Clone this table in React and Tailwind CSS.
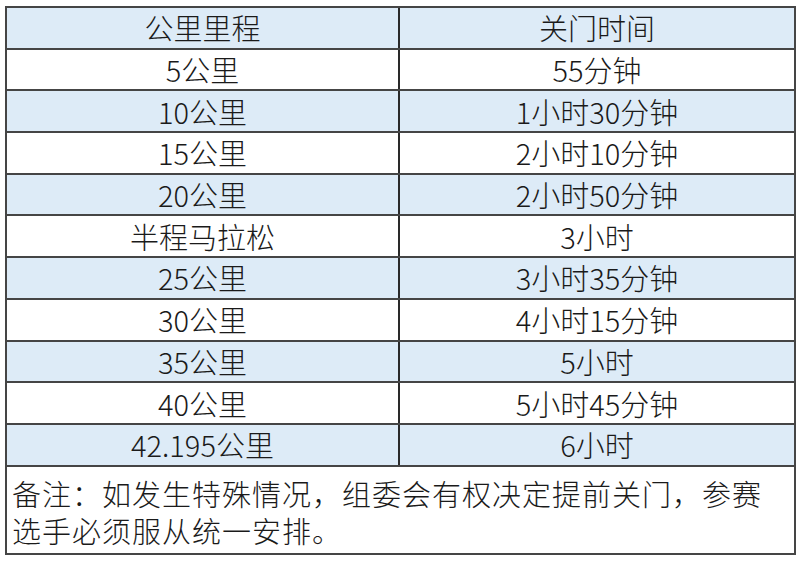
import React from "react";

const ROWS = [
  ["5公里", "55分钟"],
  ["10公里", "1小时30分钟"],
  ["15公里", "2小时10分钟"],
  ["20公里", "2小时50分钟"],
  ["半程马拉松", "3小时"],
  ["25公里", "3小时35分钟"],
  ["30公里", "4小时15分钟"],
  ["35公里", "5小时"],
  ["40公里", "5小时45分钟"],
  ["42.195公里", "6小时"],
];

function Row({ left, right, blue }) {
  return (
    <div className={`grid h-[41.7px] grid-cols-[393px_1fr] border-b-2 border-[#454545] ${blue ? "bg-[#ddebf7]" : "bg-white"}`}>
      <div className="flex items-center justify-center border-r-2 border-[#2a2a2a]">{left}</div>
      <div className="flex items-center justify-center">{right}</div>
    </div>
  );
}

export default function App() {
  return (
    <div className="h-[562px] w-[800px] bg-white pl-[5px] pt-[6px] text-[#1a1a1a]" style={{ fontFamily: '"Noto Sans CJK SC", "Noto Sans", sans-serif' }}>
      <div className="w-[791px] border-2 border-[#454545] text-[29px] font-light leading-none">
        <Row left="公里里程" right="关门时间" blue />
        {ROWS.map(([l, r], i) => (
          <Row key={l} left={l} right={r} blue={i % 2 === 1} />
        ))}
        <div className="flex h-[86px] flex-col px-[5px] pt-[8px] tracking-[1px]">
          <div className="h-[37px] leading-[37px]">备注：如发生特殊情况，组委会有权决定提前关门，参赛</div>
          <div className="h-[37px] leading-[37px]">选手必须服从统一安排。</div>
        </div>
      </div>
    </div>
  );
}
